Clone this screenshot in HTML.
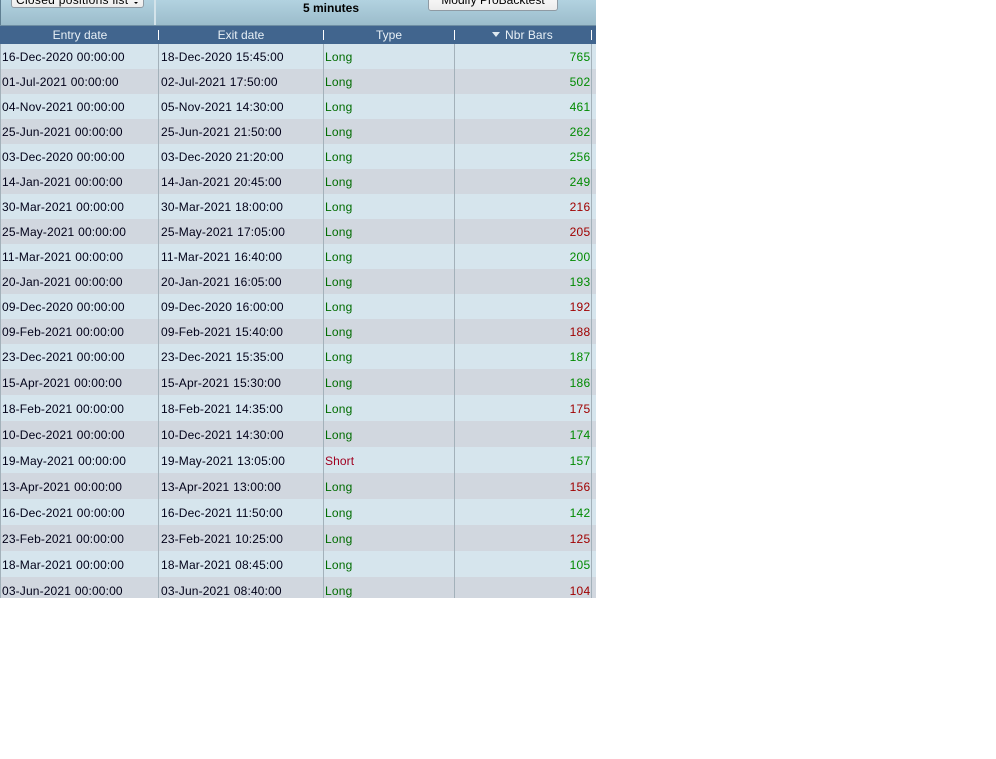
<!DOCTYPE html>
<html><head><meta charset="utf-8">
<style>
html,body{margin:0;padding:0;background:#fff;width:996px;height:759px;overflow:hidden}
body{font-family:"Liberation Sans",sans-serif;font-size:12px;position:relative}
#w{position:absolute;left:0;top:0;width:596px;height:598px;overflow:hidden;background:#d6e5ed}
.top{position:absolute;left:0;top:0;width:596px;height:25px;background:linear-gradient(#b2d2e0,#9bbccb)}
.abs{position:absolute}
.hd{position:absolute;left:0;top:25px;width:596px;height:19px;background:#41658e;border-top:1px solid #6e8ea3;box-sizing:border-box}
.ht{position:absolute;top:26px;height:18px;line-height:18px;color:#e8f0f6;text-align:center}
.tick{position:absolute;top:30px;width:1px;height:10px;background:#fff}
.r{position:absolute;left:0;width:596px}
.c{position:absolute;white-space:nowrap;color:#000018;height:18px;line-height:18px;letter-spacing:.15px;word-spacing:.3px}
.g{color:#006c00;letter-spacing:.2px}.gb{color:#008a00;letter-spacing:.3px}.rd{color:#a00020;letter-spacing:.1px}.rb{color:#a00000;letter-spacing:.3px}
.v{position:absolute;top:44px;width:1px;height:554px;background:#a3b1ba}
.btn{position:absolute;box-sizing:border-box;background:linear-gradient(#fff,#ececec);border:1px solid #8f9aa3;border-radius:3px;color:#000;text-align:center;white-space:nowrap}
</style></head><body>
<div id="w">
<div class="top"></div>
<div class="abs" style="left:0;top:0;width:1px;height:44px;background:#5f7f92"></div>
<div class="abs" style="left:154px;top:0;width:2px;height:25px;background:#d3e3ea"></div>
<div class="btn" style="left:11px;top:-12px;width:133px;height:20px;line-height:23px;text-align:left;padding-left:4px;letter-spacing:.3px">Closed positions list</div>
<div class="abs" style="left:134px;top:2px;width:0;height:0;border-left:2px solid transparent;border-right:2px solid transparent;border-top:2px solid #000"></div>
<div class="abs" style="left:303px;top:0;height:16px;line-height:16px;font-weight:bold;color:#000">5 minutes</div>
<div class="btn" style="left:428px;top:-12px;width:130px;height:23px;line-height:22px">Modify ProBacktest</div>
<div class="hd"></div>
<div class="ht" style="left:.5px;width:159px">Entry date</div>
<div class="ht" style="left:158.5px;width:165px">Exit date</div>
<div class="ht" style="left:323.5px;width:131px">Type</div>
<div class="ht" style="left:505px;letter-spacing:.05px">Nbr Bars</div>
<div class="abs" style="left:492px;top:32px;width:0;height:0;border-left:4.5px solid transparent;border-right:4.5px solid transparent;border-top:5px solid #dfe9f0"></div>
<div class="tick" style="left:158px"></div><div class="tick" style="left:323px"></div><div class="tick" style="left:454px"></div><div class="tick" style="left:591px"></div>

<div class="r" style="top:44px;height:25px;background:#d6e5ed"></div>
<div class="r" style="top:69px;height:25px;background:#d1d7df"></div>
<div class="r" style="top:94px;height:25px;background:#d6e5ed"></div>
<div class="r" style="top:119px;height:25px;background:#d1d7df"></div>
<div class="r" style="top:144px;height:25px;background:#d6e5ed"></div>
<div class="r" style="top:169px;height:25px;background:#d1d7df"></div>
<div class="r" style="top:194px;height:25px;background:#d6e5ed"></div>
<div class="r" style="top:219px;height:25px;background:#d1d7df"></div>
<div class="r" style="top:244px;height:25px;background:#d6e5ed"></div>
<div class="r" style="top:269px;height:25px;background:#d1d7df"></div>
<div class="r" style="top:294px;height:25px;background:#d6e5ed"></div>
<div class="r" style="top:319px;height:25px;background:#d1d7df"></div>
<div class="r" style="top:344px;height:25px;background:#d6e5ed"></div>
<div class="r" style="top:369px;height:26px;background:#d1d7df"></div>
<div class="r" style="top:395px;height:26px;background:#d6e5ed"></div>
<div class="r" style="top:421px;height:26px;background:#d1d7df"></div>
<div class="r" style="top:447px;height:26px;background:#d6e5ed"></div>
<div class="r" style="top:473px;height:26px;background:#d1d7df"></div>
<div class="r" style="top:499px;height:26px;background:#d6e5ed"></div>
<div class="r" style="top:525px;height:26px;background:#d1d7df"></div>
<div class="r" style="top:551px;height:26px;background:#d6e5ed"></div>
<div class="r" style="top:577px;height:21px;background:#d1d7df"></div>

<div class="abs" style="left:0;top:44px;width:1px;height:554px;background:#a3b1ba"></div>
<div class="v" style="left:158px"></div><div class="v" style="left:323px"></div><div class="v" style="left:454px"></div><div class="v" style="left:591px"></div>

<div class="c" style="left:2px;top:48px">16-Dec-2020 00:00:00</div><div class="c" style="left:161px;top:48px">18-Dec-2020 15:45:00</div><div class="c g" style="left:325px;top:48px">Long</div><div class="c gb" style="right:5.5px;top:48px">765</div>
<div class="c" style="left:2px;top:73px">01-Jul-2021 00:00:00</div><div class="c" style="left:161px;top:73px">02-Jul-2021 17:50:00</div><div class="c g" style="left:325px;top:73px">Long</div><div class="c gb" style="right:5.5px;top:73px">502</div>
<div class="c" style="left:2px;top:98px">04-Nov-2021 00:00:00</div><div class="c" style="left:161px;top:98px">05-Nov-2021 14:30:00</div><div class="c g" style="left:325px;top:98px">Long</div><div class="c gb" style="right:5.5px;top:98px">461</div>
<div class="c" style="left:2px;top:123px">25-Jun-2021 00:00:00</div><div class="c" style="left:161px;top:123px">25-Jun-2021 21:50:00</div><div class="c g" style="left:325px;top:123px">Long</div><div class="c gb" style="right:5.5px;top:123px">262</div>
<div class="c" style="left:2px;top:148px">03-Dec-2020 00:00:00</div><div class="c" style="left:161px;top:148px">03-Dec-2020 21:20:00</div><div class="c g" style="left:325px;top:148px">Long</div><div class="c gb" style="right:5.5px;top:148px">256</div>
<div class="c" style="left:2px;top:173px">14-Jan-2021 00:00:00</div><div class="c" style="left:161px;top:173px">14-Jan-2021 20:45:00</div><div class="c g" style="left:325px;top:173px">Long</div><div class="c gb" style="right:5.5px;top:173px">249</div>
<div class="c" style="left:2px;top:198px">30-Mar-2021 00:00:00</div><div class="c" style="left:161px;top:198px">30-Mar-2021 18:00:00</div><div class="c g" style="left:325px;top:198px">Long</div><div class="c rb" style="right:5.5px;top:198px">216</div>
<div class="c" style="left:2px;top:223px">25-May-2021 00:00:00</div><div class="c" style="left:161px;top:223px">25-May-2021 17:05:00</div><div class="c g" style="left:325px;top:223px">Long</div><div class="c rb" style="right:5.5px;top:223px">205</div>
<div class="c" style="left:2px;top:248px">11-Mar-2021 00:00:00</div><div class="c" style="left:161px;top:248px">11-Mar-2021 16:40:00</div><div class="c g" style="left:325px;top:248px">Long</div><div class="c gb" style="right:5.5px;top:248px">200</div>
<div class="c" style="left:2px;top:273px">20-Jan-2021 00:00:00</div><div class="c" style="left:161px;top:273px">20-Jan-2021 16:05:00</div><div class="c g" style="left:325px;top:273px">Long</div><div class="c gb" style="right:5.5px;top:273px">193</div>
<div class="c" style="left:2px;top:298px">09-Dec-2020 00:00:00</div><div class="c" style="left:161px;top:298px">09-Dec-2020 16:00:00</div><div class="c g" style="left:325px;top:298px">Long</div><div class="c rb" style="right:5.5px;top:298px">192</div>
<div class="c" style="left:2px;top:323px">09-Feb-2021 00:00:00</div><div class="c" style="left:161px;top:323px">09-Feb-2021 15:40:00</div><div class="c g" style="left:325px;top:323px">Long</div><div class="c rb" style="right:5.5px;top:323px">188</div>
<div class="c" style="left:2px;top:348px">23-Dec-2021 00:00:00</div><div class="c" style="left:161px;top:348px">23-Dec-2021 15:35:00</div><div class="c g" style="left:325px;top:348px">Long</div><div class="c gb" style="right:5.5px;top:348px">187</div>
<div class="c" style="left:2px;top:374px">15-Apr-2021 00:00:00</div><div class="c" style="left:161px;top:374px">15-Apr-2021 15:30:00</div><div class="c g" style="left:325px;top:374px">Long</div><div class="c gb" style="right:5.5px;top:374px">186</div>
<div class="c" style="left:2px;top:400px">18-Feb-2021 00:00:00</div><div class="c" style="left:161px;top:400px">18-Feb-2021 14:35:00</div><div class="c g" style="left:325px;top:400px">Long</div><div class="c rb" style="right:5.5px;top:400px">175</div>
<div class="c" style="left:2px;top:426px">10-Dec-2021 00:00:00</div><div class="c" style="left:161px;top:426px">10-Dec-2021 14:30:00</div><div class="c g" style="left:325px;top:426px">Long</div><div class="c gb" style="right:5.5px;top:426px">174</div>
<div class="c" style="left:2px;top:452px">19-May-2021 00:00:00</div><div class="c" style="left:161px;top:452px">19-May-2021 13:05:00</div><div class="c rd" style="left:325px;top:452px">Short</div><div class="c gb" style="right:5.5px;top:452px">157</div>
<div class="c" style="left:2px;top:478px">13-Apr-2021 00:00:00</div><div class="c" style="left:161px;top:478px">13-Apr-2021 13:00:00</div><div class="c g" style="left:325px;top:478px">Long</div><div class="c rb" style="right:5.5px;top:478px">156</div>
<div class="c" style="left:2px;top:504px">16-Dec-2021 00:00:00</div><div class="c" style="left:161px;top:504px">16-Dec-2021 11:50:00</div><div class="c g" style="left:325px;top:504px">Long</div><div class="c gb" style="right:5.5px;top:504px">142</div>
<div class="c" style="left:2px;top:530px">23-Feb-2021 00:00:00</div><div class="c" style="left:161px;top:530px">23-Feb-2021 10:25:00</div><div class="c g" style="left:325px;top:530px">Long</div><div class="c rb" style="right:5.5px;top:530px">125</div>
<div class="c" style="left:2px;top:556px">18-Mar-2021 00:00:00</div><div class="c" style="left:161px;top:556px">18-Mar-2021 08:45:00</div><div class="c g" style="left:325px;top:556px">Long</div><div class="c gb" style="right:5.5px;top:556px">105</div>
<div class="c" style="left:2px;top:582px">03-Jun-2021 00:00:00</div><div class="c" style="left:161px;top:582px">03-Jun-2021 08:40:00</div><div class="c g" style="left:325px;top:582px">Long</div><div class="c rb" style="right:5.5px;top:582px">104</div>
</div>
</body></html>
